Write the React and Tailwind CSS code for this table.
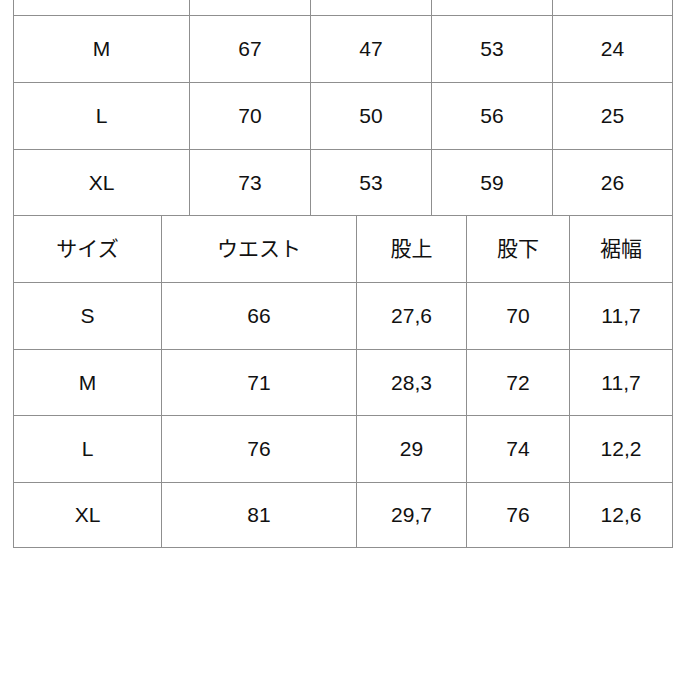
import React from 'react';

const topCols = [176, 121, 121, 121, 121];
const bottomCols = [148, 195, 110, 103, 104];

const topRows = [
  { h: 67, cells: ['', '', '', '', ''] },
  { h: 67, cells: ['M', '67', '47', '53', '24'] },
  { h: 67, cells: ['L', '70', '50', '56', '25'] },
  { h: 66, cells: ['XL', '73', '53', '59', '26'] },
];

const bottomRows = [
  { h: 67, cells: ['サイズ', 'ウエスト', '股上', '股下', '裾幅'] },
  { h: 67, cells: ['S', '66', '27,6', '70', '11,7'] },
  { h: 66, cells: ['M', '71', '28,3', '72', '11,7'] },
  { h: 67, cells: ['L', '76', '29', '74', '12,2'] },
  { h: 66, cells: ['XL', '81', '29,7', '76', '12,6'] },
];

const Row = ({ row, cols, last }) => (
  <div className="flex">
    {row.cells.map((c, i) => (
      <div
        key={i}
        style={{ width: cols[i], height: row.h }}
        className={`flex items-center justify-center border-t border-l border-[#8f8f8f] ${i === cols.length - 1 ? 'border-r' : ''} ${last ? 'border-b' : ''}`}
      >
        {c}
      </div>
    ))}
  </div>
);

export default function App() {
  return (
    <div
      className="w-[687px] h-[687px] overflow-hidden bg-white text-[#111] text-[21px]"
      style={{ fontFamily: '"Liberation Sans", "Noto Sans CJK JP", sans-serif' }}
    >
      <div className="mt-[-52px] ml-[13px] flex flex-col w-fit">
        {topRows.map((r, i) => (
          <Row key={i} row={r} cols={topCols} />
        ))}
        {bottomRows.map((r, i) => (
          <Row key={i} row={r} cols={bottomCols} last={i === bottomRows.length - 1} />
        ))}
      </div>
    </div>
  );
}
